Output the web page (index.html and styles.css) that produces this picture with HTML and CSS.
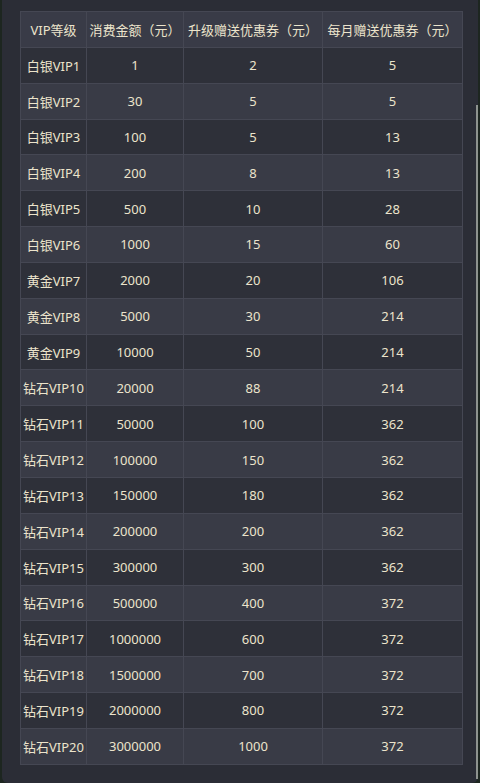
FILE: index.html
```html
<!DOCTYPE html>
<html lang="zh">
  <head>
    <meta charset="UTF-8" />
    <meta name="viewport" content="width=device-width, initial-scale=1.0" />
    <title>VIP等级</title>
    <link rel="stylesheet" href="styles.css">
  </head>
  <body>
    <div class="panel">
      <table class="vip-table">
        <colgroup>
          <col class="c1"><col class="c2"><col class="c3"><col class="c4">
        </colgroup>
        <thead>
          <tr><th>VIP等级</th><th>消费金额（元）</th><th>升级赠送优惠券（元）</th><th>每月赠送优惠券（元）</th></tr>
        </thead>
        <tbody>
          <tr><td>白银VIP1</td><td>1</td><td>2</td><td>5</td></tr>
          <tr><td>白银VIP2</td><td>30</td><td>5</td><td>5</td></tr>
          <tr><td>白银VIP3</td><td>100</td><td>5</td><td>13</td></tr>
          <tr><td>白银VIP4</td><td>200</td><td>8</td><td>13</td></tr>
          <tr><td>白银VIP5</td><td>500</td><td>10</td><td>28</td></tr>
          <tr><td>白银VIP6</td><td>1000</td><td>15</td><td>60</td></tr>
          <tr><td>黄金VIP7</td><td>2000</td><td>20</td><td>106</td></tr>
          <tr><td>黄金VIP8</td><td>5000</td><td>30</td><td>214</td></tr>
          <tr><td>黄金VIP9</td><td>10000</td><td>50</td><td>214</td></tr>
          <tr><td>钻石VIP10</td><td>20000</td><td>88</td><td>214</td></tr>
          <tr><td>钻石VIP11</td><td>50000</td><td>100</td><td>362</td></tr>
          <tr><td>钻石VIP12</td><td>100000</td><td>150</td><td>362</td></tr>
          <tr><td>钻石VIP13</td><td>150000</td><td>180</td><td>362</td></tr>
          <tr><td>钻石VIP14</td><td>200000</td><td>200</td><td>362</td></tr>
          <tr><td>钻石VIP15</td><td>300000</td><td>300</td><td>362</td></tr>
          <tr><td>钻石VIP16</td><td>500000</td><td>400</td><td>372</td></tr>
          <tr><td>钻石VIP17</td><td>1000000</td><td>600</td><td>372</td></tr>
          <tr><td>钻石VIP18</td><td>1500000</td><td>700</td><td>372</td></tr>
          <tr><td>钻石VIP19</td><td>2000000</td><td>800</td><td>372</td></tr>
          <tr><td>钻石VIP20</td><td>3000000</td><td>1000</td><td>372</td></tr>
        </tbody>
      </table>
      <div class="scroll-thumb"></div>
    </div>
  </body>
</html>
```

FILE: styles.css
```css
body {
  margin: 0;
  background: #1d2620;
  font-family: 'Noto Sans', 'Noto Sans CJK SC', sans-serif;
  color: #ece4cc;
}

/* dark card behind the table */
.panel {
  position: relative;
  box-sizing: border-box;
  height: 783px;
  margin-left: 2px;
  margin-right: 2px;
  padding: 11px 16px 0 18px;
  background: #2b2d36;
  border-radius: 0 0 6px 6px;
}

.vip-table {
  width: 442px;
  border-collapse: collapse;
  table-layout: fixed;
  font-size: 13px;
}
.c1 { width: 66px; }
.c2 { width: 97px; }
.c3 { width: 139px; }
.c4 { width: 140px; }

.vip-table th,
.vip-table td {
  height: 35.85px;
  padding: 0;
  border: 1px solid #454753;
  text-align: center;
  white-space: nowrap;
  box-sizing: border-box;
}
.vip-table th {
  font-weight: normal;
  background: #393b47;
}
.vip-table tbody tr:nth-child(odd) td {
  background: #2e3039;
}
.vip-table tbody tr:nth-child(even) td {
  background: #393b46;
}

/* thin scrollbar on the right edge */
.scroll-thumb {
  position: absolute;
  right: 0;
  top: 105px;
  bottom: 4px;
  width: 2px;
  background: #8e938f;
}
```
